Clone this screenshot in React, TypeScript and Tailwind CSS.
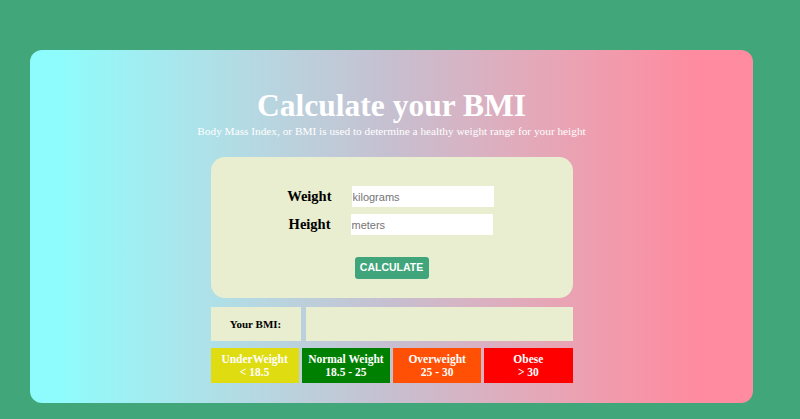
import React from 'react';

const categories = [
  { name: 'UnderWeight', range: '< 18.5', bg: 'bg-[#e0dc12]' },
  { name: 'Normal Weight', range: '18.5 - 25', bg: 'bg-[#008000]' },
  { name: 'Overweight', range: '25 - 30', bg: 'bg-[#ff5005]' },
  { name: 'Obese', range: '> 30', bg: 'bg-[#ff0000]' },
];

const App: React.FC = () => {
  return (
    <div className="w-[800px] h-[419px] bg-[#41a67a] pt-[50px] pl-[30px] overflow-hidden font-['Liberation_Serif',serif]">
      <div className="w-[723px] h-[353px] rounded-[12px] bg-gradient-to-r from-[#8efcfc] from-[4%] via-[#c6bfd0] to-[#fe8b9f] to-[92%] flex flex-col items-center pt-[38px]">
        <h1 className="text-white font-bold text-[31.5px] leading-[36px]">Calculate your BMI</h1>
        <p className="text-white text-[11.3px] leading-[14px]">
          Body Mass Index, or BMI is used to determine a healthy weight range for your height
        </p>

        <div className="w-[362px] mt-[19px]">
          <div className="h-[141px] bg-[#e8eecf] rounded-[14px] flex flex-col pt-[29px]">
            <div className="flex items-center gap-[20px]">
              <label className="w-[121px] text-right font-bold text-[14.5px] leading-[21px]">Weight</label>
              <input
                placeholder="kilograms"
                className="w-[142px] h-[21px] bg-white text-[11px] px-[1px] font-['Liberation_Sans',sans-serif] placeholder:text-[#757575] outline-none"
              />
            </div>
            <div className="flex items-center gap-[20px] mt-[7px]">
              <label className="w-[120px] text-right font-bold text-[14.5px] leading-[21px]">Height</label>
              <input
                placeholder="meters"
                className="w-[142px] h-[21px] bg-white text-[11px] px-[1px] font-['Liberation_Sans',sans-serif] placeholder:text-[#757575] outline-none"
              />
            </div>
            <button className="mt-[22px] self-center w-[74px] h-[22px] rounded-[3px] bg-[#40a57a] text-white font-bold text-[10.5px] font-['Liberation_Sans',sans-serif]">
              CALCULATE
            </button>
          </div>

          <div className="flex gap-[5px] mt-[9px] h-[34px]">
            <div className="w-[90px] bg-[#e8eecf] flex items-center justify-center font-bold text-[11px]">
              Your BMI:
            </div>
            <div className="flex-1 bg-[#e8eecf]" />
          </div>

          <div className="grid grid-cols-4 gap-[3px] mt-[7px] h-[35px]">
            {categories.map(c => (
              <div
                key={c.name}
                className={`${c.bg} text-white font-bold text-[11.5px] leading-[13px] flex flex-col items-center justify-center`}
              >
                <span>{c.name}</span>
                <span>{c.range}</span>
              </div>
            ))}
          </div>
        </div>
      </div>
    </div>
  );
};

export default App;
